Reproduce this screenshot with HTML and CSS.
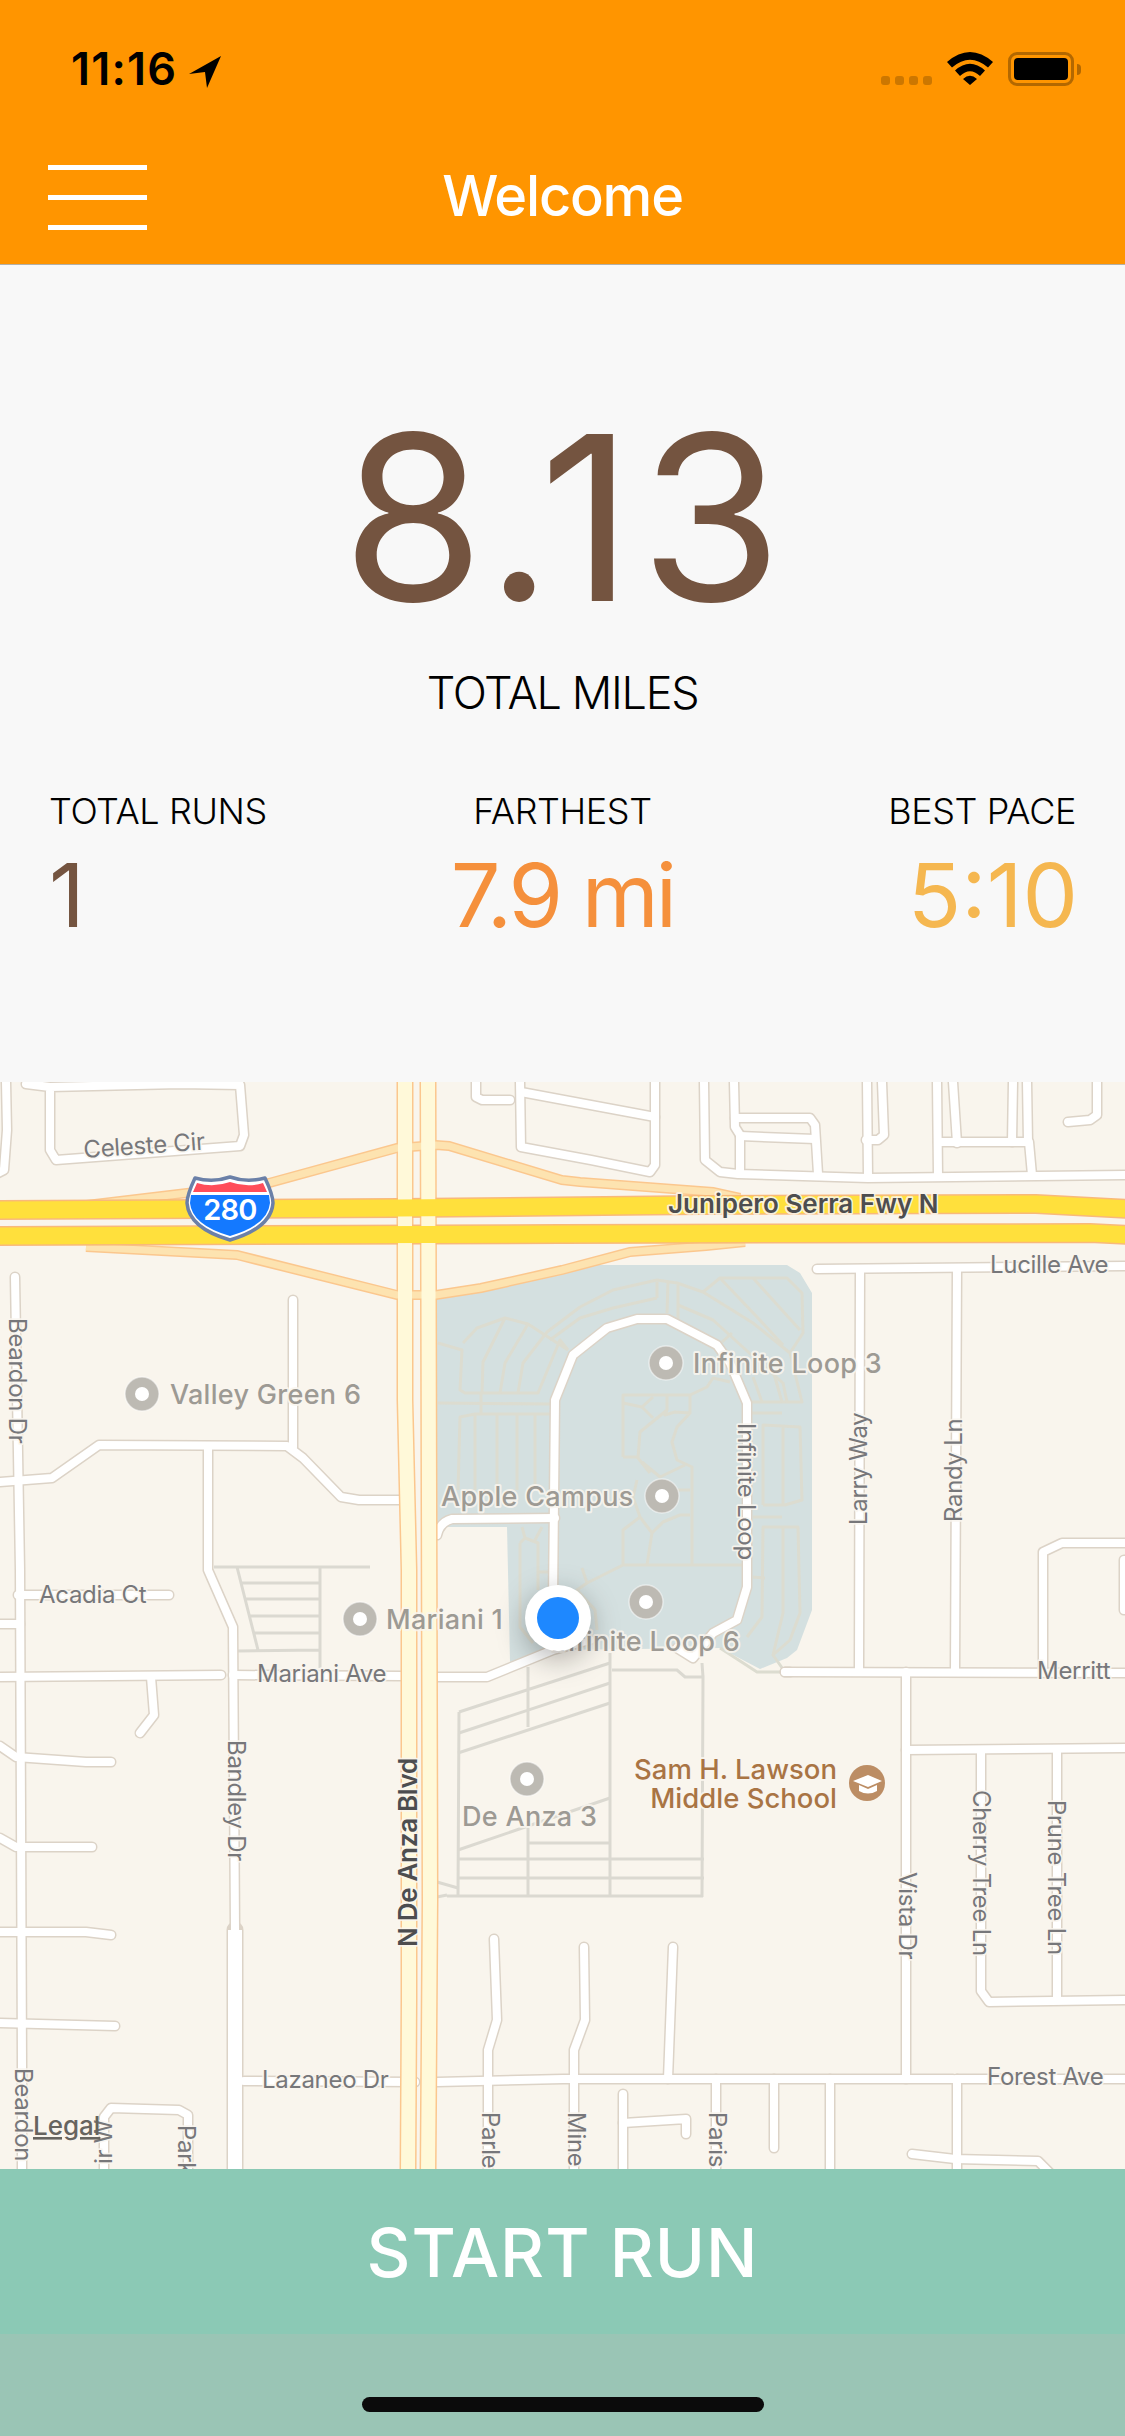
FILE: index.html
```html
<!DOCTYPE html>
<html lang="en">
<head>
<meta charset="utf-8">
<title>Welcome</title>
<link rel="stylesheet" href="styles.css">
</head>
<body>
<div class="screen">
  <header class="header">
    <div class="status">
      <div class="status-left">
        <span class="time">11:16</span>
        <svg class="loc" viewBox="0 0 32 32"><path d="M32 0 L0 18 L16 16 L18 32 Z"/></svg>
      </div>
      <div class="status-right">
        <div class="dots"><i></i><i></i><i></i><i></i></div>
        <svg class="wifi" viewBox="0 0 46 33"><path d="M0 10 Q23 -10 46 10 L41 15.500 Q23 0 5 15.500 Z M8 18.500 Q23 5 38 18.500 L33 24 Q23 14.500 13 24 Z M16 27 Q23 20.500 30 27 L23 33 Z"/></svg>
        <div class="battery"><div class="battery-level"></div></div>
        <div class="battery-nub"></div>
      </div>
    </div>
    <div class="nav">
      <div class="burger"><span></span><span></span><span></span></div>
      <h1 class="title">Welcome</h1>
      <div class="nav-spacer"></div>
    </div>
  </header>

  <section class="summary">
    <div class="big">8.13</div>
    <div class="big-label">TOTAL MILES</div>
    <div class="stats">
      <div class="stat stat-left">
        <div class="stat-label">TOTAL RUNS</div>
        <div class="stat-value brown">1</div>
      </div>
      <div class="stat stat-center">
        <div class="stat-label">FARTHEST</div>
        <div class="stat-value orange">7.9 mi</div>
      </div>
      <div class="stat stat-right">
        <div class="stat-label">BEST PACE</div>
        <div class="stat-value yellow">5:10</div>
      </div>
    </div>
  </section>

  <div class="map">
    <svg class="map-svg" viewBox="0 1082 1125 1087" width="1125" height="1087">
      <defs>
        <filter id="dotshadow" x="-60%" y="-60%" width="220%" height="220%"><feGaussianBlur stdDeviation="14"/></filter>
        <g id="roads">
          <!-- top left -->
          <path d="M6 1082 L7 1130 L4 1170 L-6 1175"/>
          <path d="M26 1084 L50 1087 L180 1084 L240 1085 L244 1135 L240 1146 L56 1160 L50 1150 L50 1087"/>
          <path d="M476 1082 L476 1097 L482 1100 L510 1100"/>
          <path d="M520 1082 L521 1147 L591 1160 L650 1172 L655 1165 L655 1082"/>
          <path d="M521 1092 L655 1117"/>
          <path d="M704 1082 L705 1160 L720 1172 L738 1174 L868 1178 L1125 1175"/>
          <path d="M734 1082 L735 1127 L740 1135 L740 1172"/>
          <path d="M735 1118 L810 1118 L815 1125 L818 1174"/>
          <path d="M740 1136 L815 1139"/>
          <path d="M867 1082 L868 1175"/>
          <path d="M882 1082 L884 1135 L878 1140 L866 1140"/>
          <path d="M937 1082 L938 1175"/>
          <path d="M953 1082 L957 1143"/>
          <path d="M938 1142 L1029 1142 L1032 1175"/>
          <path d="M1013 1082 L1012 1142"/>
          <path d="M1027 1082 L1028 1142"/>
          <path d="M1097 1082 L1097 1115 L1090 1120 L1068 1122"/>
          <!-- right side -->
          <path d="M817 1269 L1125 1266"/>
          <path d="M860 1269 L859 1671"/>
          <path d="M957 1269 L955 1671"/>
          <path d="M1125 1543 L1062 1543 L1043 1552 L1043 1671"/>
          <path d="M1124 1560 L1124 1610"/>
          <path d="M785 1672 L1125 1673"/>
          <path d="M906 1672 L906 2079"/>
          <path d="M906 1750 L1125 1748"/>
          <path d="M981 1750 L981 1991 L989 2002 L1125 2000"/>
          <path d="M1057 1750 L1057 2000"/>
          <!-- lower streets -->
          <path d="M244 2081 L415 2082 M437 2082 L563 2079 L953 2079"/>
          <path d="M957 2079 L1125 2079"/>
          <path d="M208 1447 L208 1570 L233 1627 L235 1930"/>
          <path d="M0 1482 L52 1478 L99 1445 L287 1446 L303 1458 L341 1497 L359 1500 L400 1500"/>
          <path d="M293 1300 L293 1447"/>
          <path d="M15 1277 L20 1570 L22 2067 L22 2169"/>
          <path d="M0 1624 L20 1624"/>
          <path d="M18 1595 L169 1595"/>
          <path d="M0 1677 L221 1675"/>
          <path d="M233 1675 L402 1676"/>
          <path d="M151 1677 L154 1715 L140 1733"/>
          <path d="M0 1746 L16 1757 L86 1762 L111 1762"/>
          <path d="M0 1838 L16 1847 L92 1847"/>
          <path d="M0 1932 L86 1932 L111 1935"/>
          <path d="M0 2023 L115 2026"/>
          <path d="M104 2169 L104 2117 L111 2108 L179 2110 L188 2115 L188 2169"/>
          <path d="M494 1939 L497 2020 L488 2050 L488 2169"/>
          <path d="M584 1947 L585 2020 L574 2050 L574 2169"/>
          <path d="M673 1947 L668 2079"/>
          <path d="M623 2094 L623 2169"/>
          <path d="M623 2123 L686 2119 L686 2134"/>
          <path d="M716 2079 L716 2169"/>
          <path d="M774 2079 L774 2148"/>
          <path d="M830 2079 L830 2169"/>
          <path d="M957 2079 L957 2169"/>
          <path d="M912 2154 L955 2159 L1038 2161 L1052 2175"/>
          <!-- campus -->
          <path d="M553 1600 L555 1400 L573 1355 L607 1328 L637 1319 L667 1319 L717 1345 L730 1363 L747 1403 L747 1587 L737 1620 L713 1633 L693 1658 L677 1648"/>
          <path d="M437 1535 Q440 1522 452 1519 L555 1518"/>
          <path d="M437 1677 L487 1677 L553 1650 L590 1640"/>
          <path d="M785 1672 L790 1672"/>
        </g>
        <g id="paths">
          <path d="M438 1343 L462 1350 L460 1390 L465 1393 L538 1393 L560 1340 L568 1350 M463 1343 L477 1328 L505 1318 L528 1324 L568 1350"/>
          <path d="M482 1393 L483 1362 L505 1318 M500 1393 L505 1363 L528 1324 M518 1393 L523 1363 L547 1332 L580 1307 L613 1290 L657 1280 L677 1283 L703 1292 L753 1323 L790 1353 L802 1402 L750 1402"/>
          <path d="M550 1340 L580 1318 L613 1308 L657 1298 M657 1282 L657 1298 M668 1282 L667 1313 M678 1285 L678 1320"/>
          <path d="M678 1305 L713 1320 L757 1360 L783 1383 L787 1402"/>
          <path d="M703 1292 L720 1278 L787 1278 L802 1293 L803 1333 L790 1353 M720 1278 L757 1317 L783 1345 M753 1278 L800 1330 M770 1360 L782 1402 M753 1377 L762 1402 M722 1342 L732 1333"/>
          <path d="M438 1403 L550 1404 M481 1393 L481 1413"/>
          <path d="M458 1490 L460 1417 L475 1414 L550 1414 M475 1414 L475 1490 M497 1414 L497 1490 M517 1414 L517 1490 M535 1414 L535 1490"/>
          <path d="M750 1413 L782 1413 M763 1505 L763 1425 L800 1427 L802 1500 L785 1505 L763 1505 M783 1425 L783 1505 M753 1517 L782 1517"/>
          <path d="M747 1637 L762 1617 L763 1527 L798 1527 L800 1613 L790 1640 L773 1655 L783 1613 L783 1527 M753 1577 L765 1578"/>
          <path d="M692 1565 L692 1467 L677 1460 L672 1442 L677 1427 L690 1413 L675 1412 L665 1415 L667 1410 L640 1432 L638 1458 L650 1473 M623 1403 L642 1407 L653 1418 M642 1407 L653 1397 M667 1395 L667 1410 M690 1395 L690 1413"/>
          <path d="M623 1457 L623 1395 L690 1395 L707 1387 L713 1378 L730 1382 M623 1457 L638 1457"/>
          <path d="M685 1465 L660 1477 L642 1462 M637 1480 L633 1497 L640 1517 L623 1530 L623 1565 M640 1517 L652 1533 L647 1565 M652 1533 L663 1522 L680 1515 L690 1515 M677 1490 L690 1490"/>
          <path d="M743 1565 L623 1565 L587 1583 L582 1568 M587 1583 L577 1590 L595 1610 L597 1630"/>
          <path d="M520 1543 L525 1538 L538 1543 L538 1590 M520 1543 L520 1627 L533 1643 M522 1527 L525 1538 M542 1527 L535 1540 M538 1572 L553 1572"/>
          <path d="M720 1648 L757 1672 L785 1672 M773 1655 L785 1672"/>
        </g>
        <g id="parcels">
          <path d="M528 1667 L528 1727 M459 1712 L610 1663 M459 1733 L610 1683 M458 1753 L610 1703"/>
          <path d="M459 1712 L458 1895 M610 1653 L610 1895"/>
          <path d="M612 1670 L677 1670 L685 1677 L703 1677 L702 1897 M702 1663 L703 1677"/>
          <path d="M458 1850 L610 1798 M528 1827 L528 1895 M528 1843 L610 1843"/>
          <path d="M458 1859 L704 1859 M458 1878 L704 1878 M447 1896 L703 1896 M437 1897 L447 1895 M437 1882 L458 1888"/>
          <path d="M214 1567 L370 1567 M240 1583 L320 1583 M245 1599 L320 1599 M250 1616 L320 1616 M254 1633 L320 1633 M238 1651 L320 1650 M320 1567 L320 1668 M237 1567 L258 1650"/>
        </g>
      </defs>

      <rect class="land" x="0" y="1082" width="1125" height="1087"/>
      <path class="campus" d="M437 1298 L480 1285 L593 1265 L787 1265 L800 1273 L812 1293 L812 1610 L797 1650 L787 1658 L760 1669 L720 1648 L553 1650 L510 1662 L507 1527 L437 1527 Z"/>
      <use href="#parcels" class="parcel"/>
      <use href="#paths" class="walk"/>
      <use href="#roads" class="road-case"/>
      <path class="road-fill wide-case" d="M235 1930 L235 2175"/>
      <use href="#roads" class="road-fill"/>
      <path class="wide-fill" d="M235 1930 L235 2175"/>

      <path class="ramp-case" d="M70 1207 L187 1193 L269 1183 L397 1148 L436 1145 L449 1146 L562 1180 L580 1182 L713 1192 L740 1198"/>
      <path class="ramp-case" d="M86 1247 L237 1255 L397 1295 L436 1295 L481 1288 L562 1270 L630 1252 L706 1246 L745 1242"/>
      <path class="blvd-case" d="M405 1082 L405 1400 L409 1570 L409 2000 L408 2175"/>
      <path class="blvd-case" d="M428 1082 L429 1500 L430 1900 L428 2175"/>
      <path class="ramp-fill" d="M70 1207 L187 1193 L269 1183 L397 1148 L436 1145 L449 1146 L562 1180 L580 1182 L713 1192 L740 1198"/>
      <path class="ramp-fill" d="M86 1247 L237 1255 L397 1295 L436 1295 L481 1288 L562 1270 L630 1252 L706 1246 L745 1242"/>
      <path class="fwy-case" d="M-5 1210 L400 1208 L700 1205 L1036 1204 L1130 1209"/>
      <path class="fwy-case" d="M-5 1236 L560 1234 L1090 1233 L1130 1235"/>
      <path class="blvd-fill" d="M405 1082 L405 1400 L409 1570 L409 2000 L408 2175"/>
      <path class="blvd-fill" d="M428 1082 L429 1500 L430 1900 L428 2175"/>
      <path class="fwy-fill" d="M-5 1210 L400 1208 L700 1205 L1036 1204 L1130 1209"/>
      <path class="fwy-fill" d="M-5 1236 L560 1234 L1090 1233 L1130 1235"/>

      <!-- road labels -->
      <text class="lbl" transform="translate(84 1158) rotate(-4)">Celeste Cir</text>
      <text class="lbl strong wide" x="668" y="1213">Junipero Serra Fwy N</text>
      <text class="lbl" x="990" y="1273">Lucille Ave</text>
      <text class="lbl" transform="translate(9 1318) rotate(90)">Beardon Dr</text>
      <text class="lbl" transform="translate(738 1423) rotate(90)">Infinite Loop</text>
      <text class="lbl" transform="translate(867 1525) rotate(-90)">Larry Way</text>
      <text class="lbl" transform="translate(962 1522) rotate(-90)">Randy Ln</text>
      <text class="lbl" x="39" y="1603">Acadia Ct</text>
      <text class="lbl" x="257" y="1682">Mariani Ave</text>
      <text class="lbl" transform="translate(228 1740) rotate(90)">Bandley Dr</text>
      <text class="lbl strong" transform="translate(417 1947) rotate(-90)">N De Anza Blvd</text>
      <text class="lbl" x="262" y="2088">Lazaneo Dr</text>
      <text class="lbl" transform="translate(15 2068) rotate(90)">Beardon</text>
      <text class="lbl" transform="translate(112 2164) rotate(-90)">ir W</text>
      <text class="lbl" transform="translate(178 2125) rotate(90)">Park</text>
      <text class="lbl" transform="translate(482 2112) rotate(90)">Parle</text>
      <text class="lbl" transform="translate(568 2112) rotate(90)">Mine</text>
      <text class="lbl" transform="translate(709 2112) rotate(90)">Paris</text>
      <text class="lbl" transform="translate(899 1872) rotate(90)">Vista Dr</text>
      <text class="lbl" transform="translate(973 1790) rotate(90)">Cherry Tree Ln</text>
      <text class="lbl" transform="translate(1048 1800) rotate(90)">Prune Tree Ln</text>
      <text class="lbl" x="1037" y="1679">Merritt</text>
      <text class="lbl" x="987" y="2085">Forest Ave</text>
      <text class="legal" x="33" y="2135">Legal</text>

      <!-- places -->
      <g class="pin"><circle cx="142" cy="1394" r="17"/><circle class="pin-hole" cx="142" cy="1394" r="7"/></g>
      <text class="poi" x="170" y="1404">Valley Green 6</text>
      <g class="pin"><circle cx="666" cy="1363" r="17"/><circle class="pin-hole" cx="666" cy="1363" r="7"/></g>
      <text class="poi" x="693" y="1373">Infinite Loop 3</text>
      <g class="pin"><circle cx="662" cy="1496" r="17"/><circle class="pin-hole" cx="662" cy="1496" r="7"/></g>
      <text class="poi" x="441" y="1506">Apple Campus</text>
      <g class="pin"><circle cx="646" cy="1602" r="17"/><circle class="pin-hole" cx="646" cy="1602" r="7"/></g>
      <text class="poi" x="551" y="1651">Infinite Loop 6</text>
      <g class="pin"><circle cx="360" cy="1619" r="17"/><circle class="pin-hole" cx="360" cy="1619" r="7"/></g>
      <text class="poi" x="386" y="1629">Mariani 1</text>
      <g class="pin"><circle cx="527" cy="1779" r="17"/><circle class="pin-hole" cx="527" cy="1779" r="7"/></g>
      <text class="poi" x="462" y="1826">De Anza 3</text>
      <text class="school" x="837" y="1779">Sam H. Lawson</text>
      <text class="school" x="837" y="1808">Middle School</text>
      <circle class="school-badge" cx="867" cy="1783" r="18"/>
      <path class="school-cap" d="M853 1781 L868 1775 L882 1781 L868 1787 Z M859 1785 L859 1791 Q868 1796 877 1791 L877 1785 L868 1789 Z"/>

      <!-- shield -->
      <path class="shield-back" d="M195 1178 Q213 1183 230 1177 Q247 1183 265 1178 Q273 1195 273 1203 Q271 1228 230 1240 Q189 1228 187 1203 Q187 1195 195 1178 Z"/>
      <path class="shield-blue" d="M191 1195 L269 1195 L270 1203 Q268 1225 230 1236 Q192 1225 190 1203 Z"/>
      <path class="shield-red" d="M197 1183 Q213 1188 230 1182 Q247 1188 263 1183 L267 1192 L193 1192 Z"/>
      <text class="shield-text" x="230" y="1220">280</text>

      <!-- user location -->
      <circle class="dot-shadow" cx="558" cy="1626" r="34" filter="url(#dotshadow)"/>
      <circle class="dot-ring" cx="558" cy="1618" r="33"/>
      <circle class="dot-core" cx="558" cy="1618" r="21"/>
    </svg>
  </div>

  <button class="start">START RUN</button>
  <footer class="home-area"><div class="home-bar"></div></footer>
</div>
</body>
</html>
```

FILE: styles.css
```css
* { box-sizing: border-box; }
html, body { margin: 0; padding: 0; }
body { background: #f8f8f8; font-family: Inter, "Liberation Sans", sans-serif; }

.screen { width: 1125px; height: 2436px; display: flex; flex-direction: column; overflow: hidden; }

/* Header */
.header { height: 265px; flex: none; background: #ff9500; border-bottom: 1px solid #b4b0a8; display: flex; flex-direction: column; }
.status { height: 132px; display: flex; justify-content: space-between; padding: 46px 44px 0 71px; }
.status-left { display: flex; align-items: flex-start; gap: 12px; }
.time { font-size: 45px; font-weight: 600; line-height: 46px; color: #000; letter-spacing: 1.2px; }
.loc { width: 32px; height: 32px; margin-top: 10px; fill: #000; }
.status-right { display: flex; align-items: flex-start; padding-top: 6px; }
.dots { display: flex; gap: 5px; margin-top: 24px; margin-right: 15px; }
.dots i { display: block; width: 9px; height: 9px; border-radius: 3px; background: #cc7700; }
.wifi { width: 46px; height: 33px; fill: #000; margin-right: 15px; }
.battery { width: 66px; height: 34px; border: 3px solid #b36800; border-radius: 9px; padding: 3px; }
.battery-level { width: 100%; height: 100%; background: #000; border-radius: 4px; }
.battery-nub { width: 4px; height: 11px; margin: 12px 0 0 3px; background: #b36800; border-radius: 0 4px 4px 0; }

.nav { display: grid; grid-template-columns: 1fr auto 1fr; align-items: center; padding: 0 48px; height: 132px; }
.burger { display: flex; flex-direction: column; gap: 25px; width: 99px; margin-top: -1px; }
.burger span { display: block; height: 5px; background: #fff; }
.title { margin: -5px 0 0; font-size: 56px; line-height: 64px; font-weight: 500; color: #fff; letter-spacing: -1.2px; }

/* Summary */
.summary { height: 817px; flex: none; background: #f8f8f8; display: flex; flex-direction: column; align-items: center; padding-top: 132px; }
.big { font-size: 230px; line-height: 240px; font-weight: 400; color: #745440; letter-spacing: 7px; margin-left: 6px; }
.big-label { font-size: 45px; line-height: 56px; font-weight: 300; color: #000; margin-top: 28px; letter-spacing: -1.3px; }
.stats { width: 100%; display: flex; justify-content: space-between; padding: 0 49px; margin-top: 68px; }
.stat { display: flex; flex-direction: column; width: 300px; }
.stat-left { align-items: flex-start; }
.stat-center { align-items: center; }
.stat-right { align-items: flex-end; }
.stat-label { font-size: 36px; line-height: 44px; font-weight: 300; color: #000; letter-spacing: -0.4px; }
.stat-value { font-size: 88px; line-height: 100px; font-weight: 400; margin-top: 12px; letter-spacing: -3px; }
.stat-value.yellow { letter-spacing: 0; margin-right: -2px; }
.brown { color: #745440; }
.orange { color: #f5903c; }
.yellow { color: #f5b750; }

/* Map */
.map { height: 1087px; flex: none; overflow: hidden; }
.map-svg { display: block; }
.land { fill: #f9f5ed; }
.campus { fill: #d4e0e0; }
.parcel { fill: none; stroke: #dbd9d1; stroke-width: 3; }
.walk { fill: none; stroke: #dcdcd0; stroke-width: 3; stroke-linejoin: round; }
.road-case { fill: none; stroke: #dcd3c7; stroke-width: 11; stroke-linecap: round; stroke-linejoin: round; }
.road-fill { fill: none; stroke: #ffffff; stroke-width: 8; stroke-linecap: round; stroke-linejoin: round; }
.wide-case { stroke: #dcd3c7; stroke-width: 17; }
.wide-fill { fill: none; stroke: #fff; stroke-width: 14; }
.ramp-case { fill: none; stroke: #fbc78e; stroke-width: 10; }
.ramp-fill { fill: none; stroke: #fde3b0; stroke-width: 7; }
.blvd-case { fill: none; stroke: #fbc78e; stroke-width: 17; }
.blvd-fill { fill: none; stroke: #fff9d9; stroke-width: 14; }
.fwy-case { fill: none; stroke: #f9b97a; stroke-width: 20; }
.fwy-fill { fill: none; stroke: #ffe03c; stroke-width: 17; }

.lbl, .poi, .school, .legal { font-family: Inter, "Liberation Sans", sans-serif; paint-order: stroke; stroke-linejoin: round; }
.lbl { font-size: 24px; fill: #77777a; stroke: rgba(250, 246, 239, 0.85); stroke-width: 3.5; letter-spacing: -0.3px; }
.lbl.strong { font-size: 26px; font-weight: 600; fill: #4d4d4f; }
.lbl.wide { letter-spacing: 0; }
.legal { font-size: 26px; font-weight: 500; fill: #66645f; text-decoration: underline; }
.poi { font-size: 27px; font-weight: 500; fill: #9d9a94; stroke: rgba(250, 246, 239, 0.85); stroke-width: 4; letter-spacing: 0.3px; }
.school { font-size: 27.5px; font-weight: 500; fill: #a97444; stroke: rgba(250, 246, 239, 0.85); stroke-width: 4; text-anchor: end; }
.pin circle { fill: #bdbab3; stroke: rgba(255, 255, 255, 0.5); stroke-width: 1.5; }
.pin circle.pin-hole { fill: #fff; stroke: none; }
.school-badge { fill: #bc8d64; }
.school-cap { fill: #fff; }
.shield-back { fill: #fff; stroke: #6b80a8; stroke-width: 3.5; stroke-linejoin: round; }
.shield-blue { fill: #1479ff; }
.shield-red { fill: #ff4d5a; }
.shield-text { font-family: Inter, "Liberation Sans", sans-serif; font-size: 29px; font-weight: 600; fill: #fff; text-anchor: middle; letter-spacing: -0.8px; }
.dot-shadow { fill: rgba(0, 0, 0, 0.28); }
.dot-ring { fill: #fff; }
.dot-core { fill: #1e88ff; }

/* Bottom */
.start { display: block; width: 100%; height: 165px; flex: none; border: 0; padding: 0; margin: 0; background: #8bc9b5; color: #fff; font-family: Inter, "Liberation Sans", sans-serif; font-size: 68px; font-weight: 450; letter-spacing: 1px; }
.home-area { flex: 1; background: #9ac5b5; display: flex; justify-content: center; align-items: flex-start; padding-top: 63px; }
.home-bar { width: 402px; height: 15px; border-radius: 8px; background: #0b0b0b; }
```
